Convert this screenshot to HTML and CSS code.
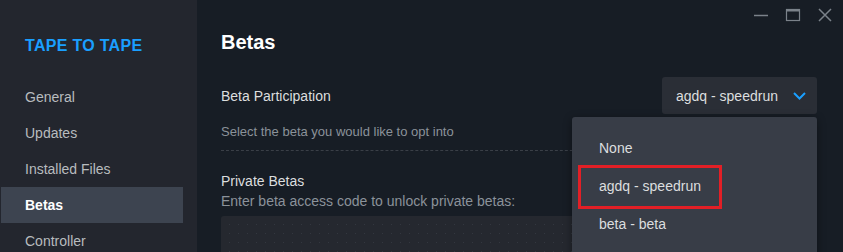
FILE: index.html
```html
<!DOCTYPE html>
<html lang="en">
<head>
    <meta charset="UTF-8">
    <meta name="viewport" content="width=device-width, initial-scale=1.0">
    <title>Betas</title>
    <link rel="stylesheet" href="styles.css">
</head>
<body>
    <div class="sidebar">
        <h2 class="game-title">TAPE TO TAPE</h2>
        <!-- settings sections -->
        <ul class="nav">
            <li class="nav-item">General</li>
            <li class="nav-item">Updates</li>
            <li class="nav-item">Installed Files</li>
            <li class="nav-item active">Betas</li>
            <li class="nav-item">Controller</li>
        </ul>
    </div>
    <div class="main">
        <div class="titlebar">
            <span class="win-btn"><svg width="16" height="16" viewBox="0 0 16 16"><path d="M1 8.5h14" stroke="#7b828a" stroke-width="1.5"/></svg></span>
            <span class="win-btn"><svg width="16" height="16" viewBox="0 0 16 16"><rect x="1.5" y="2.5" width="13" height="11" fill="none" stroke="#7b828a" stroke-width="1.2"/><path d="M1.5 3.5h13" stroke="#7b828a" stroke-width="2"/></svg></span>
            <span class="win-btn"><svg width="16" height="16" viewBox="0 0 16 16"><path d="M2 2l12 12M14 2L2 14" stroke="#7b828a" stroke-width="1.5"/></svg></span>
        </div>
        <h1 class="heading">Betas</h1>

        <div class="field-row">
            <span class="label">Beta Participation</span>
            <div class="select-wrap">
                <div class="select">
                    agdq - speedrun
                    <svg class="chevron" width="13" height="8" viewBox="0 0 13 8"><path d="M1 1l5.5 5.5L12 1" fill="none" stroke="#1a9fff" stroke-width="2"/></svg>
                </div>
                <!-- open dropdown -->
                <ul class="menu">
                    <li class="menu-item">None</li>
                    <li class="menu-item marked">agdq - speedrun</li>
                    <li class="menu-item">beta - beta</li>
                </ul>
            </div>
        </div>
        <p class="desc">Select the beta you would like to opt into</p>
        <div class="separator"></div>

        <h3 class="label">Private Betas</h3>
        <p class="desc private-desc">Enter beta access code to unlock private betas:</p>
        <div class="code-box"></div>
    </div>
</body>
</html>
```
FILE: styles.css
```css
* {
    margin: 0;
    padding: 0;
    box-sizing: border-box;
}
body {
    font-family: "Liberation Sans", Arial, sans-serif;
    display: flex;
    height: 100vh;
    overflow: hidden;
    background-color: #171d25;
}
.sidebar {
    width: 197px;
    background-color: #23262e;
    padding-right: 14px;
    padding-top: 37px;
    overflow: hidden;
}
.game-title {
    color: #1a9fff;
    font-size: 16px;
    font-weight: bold;
    letter-spacing: 0.3px;
    padding-left: 25px;
    line-height: 18px;
    margin-bottom: 24px;
}
.nav {
    list-style: none;
    margin-left: 1px;
}
.nav-item {
    color: #b8bcbf;
    font-size: 14px;
    height: 36px;
    line-height: 36px;
    padding-left: 24px;
}
.nav-item.active {
    background-color: #3d4450;
    color: #ffffff;
    font-weight: bold;
}
.main {
    flex: 1;
    padding: 0 26px 0 24px;
}
.titlebar {
    display: flex;
    justify-content: flex-end;
    gap: 16px;
    height: 30px;
    padding-top: 7px;
    margin-right: -16px;
}
.win-btn {
    width: 16px;
    height: 16px;
}
.heading {
    color: #ffffff;
    font-size: 20px;
    line-height: 24px;
    font-weight: bold;
    margin-bottom: 23px;
}
.field-row {
    display: flex;
    justify-content: space-between;
    align-items: center;
}
.label {
    color: #dcdedf;
    font-size: 14px;
    font-weight: normal;
    line-height: 18px;
}
.select-wrap {
    position: relative;
}
.select {
    width: 155px;
    height: 37px;
    background-color: #2a2e36;
    border-radius: 3px;
    color: #dcdedf;
    font-size: 14px;
    display: flex;
    align-items: center;
    padding-left: 14px;
    gap: 15px;
}
.chevron {
    margin-top: 1px;
}
.menu {
    position: absolute;
    right: 0;
    top: 40px;
    width: 245px;
    height: 160px;
    background-color: #383d47;
    border-radius: 3px;
    list-style: none;
    padding-top: 12px;
    box-shadow: 0 2px 8px rgba(0, 0, 0, 0.4);
}
.menu-item {
    position: relative;
    color: #dcdedf;
    font-size: 14px;
    height: 38px;
    line-height: 38px;
    padding-left: 27px;
}
.menu-item.marked::after {
    content: "";
    position: absolute;
    left: 6px;
    top: -2px;
    width: 144px;
    height: 44px;
    box-sizing: border-box;
    border: 3px solid #e21f26;
}
.desc {
    color: #8b929a;
    font-size: 13px;
    line-height: 18px;
    margin-top: 9px;
}
.separator {
    border-top: 1px dashed #3a3f47;
    margin-top: 9px;
    margin-bottom: 21px;
}
.private-desc {
    font-size: 14px;
    margin-top: 2px;
}
.code-box {
    margin-top: 6px;
    height: 60px;
    border-radius: 3px;
    background-color: #25282f;
    background-image: radial-gradient(circle, #33373f 0.6px, transparent 0.8px);
    background-size: 9px 9px;
    background-position: 4px 4px;
}
```
